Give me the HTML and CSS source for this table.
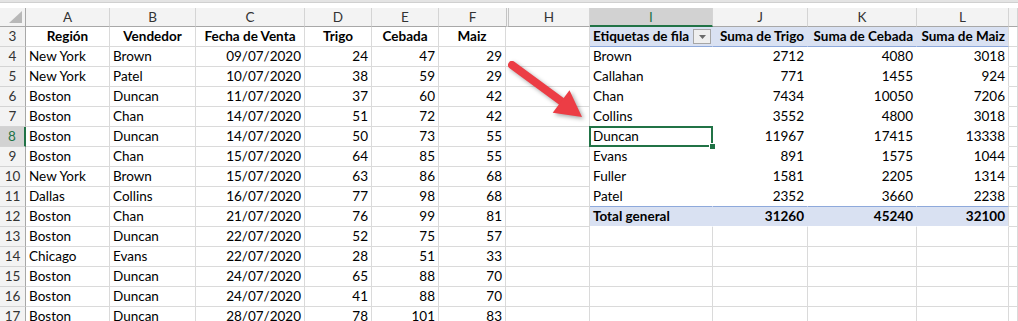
FILE: index.html
```html
<!DOCTYPE html>
<html lang="es">
<head>
<meta charset="utf-8">
<title>Tabla dinámica</title>
<link rel="stylesheet" href="styles.css">
</head>
<body>
<div class="topstrip"><div class="strip"></div></div>
<div class="sheet">
  <div class="grid">
    <!-- column headers -->
    <div class="c corner"><svg width="14" height="13" viewBox="0 0 14 13"><polygon points="13,0 13,12 0,12" fill="#b8b8b8"/></svg></div>
    <div class="c ch">A</div>
    <div class="c ch">B</div>
    <div class="c ch">C</div>
    <div class="c ch">D</div>
    <div class="c ch">E</div>
    <div class="c ch chf">F</div>
    <div class="c ch chh">H</div>
    <div class="c ch sel">I</div>
    <div class="c ch">J</div>
    <div class="c ch">K</div>
    <div class="c ch">L</div>
    <div class="c ch"></div>

    <!-- row 3 -->
    <div class="c rh">3</div>
    <div class="c b ctr">Región</div>
    <div class="c b ctr">Vendedor</div>
    <div class="c b ctr">Fecha de Venta</div>
    <div class="c b ctr">Trigo</div>
    <div class="c b ctr">Cebada</div>
    <div class="c b ctr">Maiz</div>
    <div class="c"></div>
    <div class="c ph pi b lab"><span>Etiquetas de fila</span><span class="dd"><svg width="7" height="4" viewBox="0 0 7 4"><polygon points="0,0 7,0 3.5,4" fill="#6b6b6b"/></svg></span></div>
    <div class="c ph pi b n">Suma de Trigo</div>
    <div class="c ph pi b n">Suma de Cebada</div>
    <div class="c ph pl b n">Suma de Maiz</div>
    <div class="c"></div>

    <!-- row 4 -->
    <div class="c rh">4</div>
    <div class="c">New York</div><div class="c">Brown</div><div class="c n">09/07/2020</div><div class="c n">24</div><div class="c n">47</div><div class="c n">29</div>
    <div class="c"></div>
    <div class="c pv pi">Brown</div><div class="c pv pi n">2712</div><div class="c pv pi n">4080</div><div class="c pv pl n">3018</div>
    <div class="c"></div>

    <!-- row 5 -->
    <div class="c rh">5</div>
    <div class="c">New York</div><div class="c">Patel</div><div class="c n">10/07/2020</div><div class="c n">38</div><div class="c n">59</div><div class="c n">29</div>
    <div class="c"></div>
    <div class="c pv pi">Callahan</div><div class="c pv pi n">771</div><div class="c pv pi n">1455</div><div class="c pv pl n">924</div>
    <div class="c"></div>

    <!-- row 6 -->
    <div class="c rh">6</div>
    <div class="c">Boston</div><div class="c">Duncan</div><div class="c n">11/07/2020</div><div class="c n">37</div><div class="c n">60</div><div class="c n">42</div>
    <div class="c"></div>
    <div class="c pv pi">Chan</div><div class="c pv pi n">7434</div><div class="c pv pi n">10050</div><div class="c pv pl n">7206</div>
    <div class="c"></div>

    <!-- row 7 -->
    <div class="c rh">7</div>
    <div class="c">Boston</div><div class="c">Chan</div><div class="c n">14/07/2020</div><div class="c n">51</div><div class="c n">72</div><div class="c n">42</div>
    <div class="c"></div>
    <div class="c pv pi">Collins</div><div class="c pv pi n">3552</div><div class="c pv pi n">4800</div><div class="c pv pl n">3018</div>
    <div class="c"></div>

    <!-- row 8 -->
    <div class="c rh rsel">8</div>
    <div class="c">Boston</div><div class="c">Duncan</div><div class="c n">14/07/2020</div><div class="c n">50</div><div class="c n">73</div><div class="c n">55</div>
    <div class="c"></div>
    <div class="c pv pi active">Duncan<span class="handle"></span></div><div class="c pv pi n">11967</div><div class="c pv pi n">17415</div><div class="c pv pl n">13338</div>
    <div class="c"></div>

    <!-- row 9 -->
    <div class="c rh">9</div>
    <div class="c">Boston</div><div class="c">Chan</div><div class="c n">15/07/2020</div><div class="c n">64</div><div class="c n">85</div><div class="c n">55</div>
    <div class="c"></div>
    <div class="c pv pi">Evans</div><div class="c pv pi n">891</div><div class="c pv pi n">1575</div><div class="c pv pl n">1044</div>
    <div class="c"></div>

    <!-- row 10 -->
    <div class="c rh">10</div>
    <div class="c">New York</div><div class="c">Brown</div><div class="c n">15/07/2020</div><div class="c n">63</div><div class="c n">86</div><div class="c n">68</div>
    <div class="c"></div>
    <div class="c pv pi">Fuller</div><div class="c pv pi n">1581</div><div class="c pv pi n">2205</div><div class="c pv pl n">1314</div>
    <div class="c"></div>

    <!-- row 11 -->
    <div class="c rh">11</div>
    <div class="c">Dallas</div><div class="c">Collins</div><div class="c n">16/07/2020</div><div class="c n">77</div><div class="c n">98</div><div class="c n">68</div>
    <div class="c"></div>
    <div class="c pv pi pb">Patel</div><div class="c pv pi pb n">2352</div><div class="c pv pi pb n">3660</div><div class="c pv pl pb n">2238</div>
    <div class="c"></div>

    <!-- row 12 -->
    <div class="c rh">12</div>
    <div class="c">Boston</div><div class="c">Chan</div><div class="c n">21/07/2020</div><div class="c n">76</div><div class="c n">99</div><div class="c n">81</div>
    <div class="c"></div>
    <div class="c pt pi b">Total general</div><div class="c pt pi b n">31260</div><div class="c pt pi b n">45240</div><div class="c pt pl b n">32100</div>
    <div class="c"></div>

    <!-- row 13 -->
    <div class="c rh">13</div>
    <div class="c">Boston</div><div class="c">Duncan</div><div class="c n">22/07/2020</div><div class="c n">52</div><div class="c n">75</div><div class="c n">57</div>
    <div class="c"></div><div class="c"></div><div class="c"></div><div class="c"></div><div class="c"></div><div class="c"></div>

    <!-- row 14 -->
    <div class="c rh">14</div>
    <div class="c">Chicago</div><div class="c">Evans</div><div class="c n">22/07/2020</div><div class="c n">28</div><div class="c n">51</div><div class="c n">33</div>
    <div class="c"></div><div class="c"></div><div class="c"></div><div class="c"></div><div class="c"></div><div class="c"></div>

    <!-- row 15 -->
    <div class="c rh">15</div>
    <div class="c">Boston</div><div class="c">Duncan</div><div class="c n">24/07/2020</div><div class="c n">65</div><div class="c n">88</div><div class="c n">70</div>
    <div class="c"></div><div class="c"></div><div class="c"></div><div class="c"></div><div class="c"></div><div class="c"></div>

    <!-- row 16 -->
    <div class="c rh">16</div>
    <div class="c">Boston</div><div class="c">Duncan</div><div class="c n">24/07/2020</div><div class="c n">41</div><div class="c n">88</div><div class="c n">70</div>
    <div class="c"></div><div class="c"></div><div class="c"></div><div class="c"></div><div class="c"></div><div class="c"></div>

    <!-- row 17 -->
    <div class="c rh">17</div>
    <div class="c">Boston</div><div class="c">Duncan</div><div class="c n">28/07/2020</div><div class="c n">78</div><div class="c n">101</div><div class="c n">83</div>
    <div class="c"></div><div class="c"></div><div class="c"></div><div class="c"></div><div class="c"></div><div class="c"></div>
  </div>

  <svg class="arrow" width="100" height="80" viewBox="0 0 100 80">
    <line x1="12" y1="10" x2="63" y2="47.5" stroke="#ec3d45" stroke-width="8" stroke-linecap="round"/>
    <polygon points="82,62 52.7,57.8 69.5,35.2" fill="#ec3d45"/>
  </svg>
</div>
</body>
</html>
```

FILE: styles.css
```css
html, body {
  margin: 0;
  padding: 0;
  background: #ffffff;
}

body {
  width: 1018px;
  height: 321px;
  overflow: hidden;
  font-family: Lato, "Liberation Sans", sans-serif;
  font-size: 13.5px;
  color: #000;
}

.topstrip {
  height: 8px;
  background: #ffffff;
}

.strip {
  height: 2px;
  background: #e4e4e4;
  border-bottom: 1px solid #d0d0d0;
}

.sheet {
  position: relative;
}

.grid {
  display: grid;
  grid-template-columns: 26px 84px 86px 109px 67px 67px 67px 84px 123px 95px 109px 92px 1fr;
  grid-template-rows: 19px repeat(15, 20px);
}

.c {
  box-sizing: border-box;
  border-right: 1px solid #dadada;
  border-bottom: 1px solid #dadada;
  padding: 0 3px;
  line-height: 19px;
  white-space: nowrap;
  overflow: hidden;
  background: #ffffff;
}

.n { text-align: right; }
.ctr { text-align: center; }
.b { font-weight: 700; }

.corner {
  background: #f3f3f3;
  border-right: 1px solid #a8a8a8;
  border-bottom: 1px solid #a8a8a8;
  display: flex;
  align-items: flex-end;
  justify-content: flex-end;
  padding: 0 2px 2px 0;
}

.corner svg { display: block; }

.ch {
  background: #f3f3f3;
  text-align: center;
  color: #333;
  border-right: 1px solid #d4d4d4;
  border-bottom: 1px solid #a8a8a8;
  line-height: 18px;
}

.chf { border-right: none; }
.chh { border-left: 3px double #c4c4c4; }

.ch.sel {
  background: #d2d2d2;
  color: #217346;
  border-bottom: 2px solid #217346;
}

.rh {
  background: #f3f3f3;
  text-align: center;
  color: #333;
  padding: 0;
  border-right: 1px solid #a8a8a8;
  border-bottom: 1px solid #d4d4d4;
}

.rh.rsel {
  background: #d2d2d2;
  color: #217346;
  border-right: 2px solid #217346;
}

/* pivot table */
.pv { border-bottom-color: #ffffff; }
.pi { border-right-color: transparent; }
.pl { border-right-color: #dadada; }

.ph {
  background: #d9e1f2;
  border-bottom: 1px solid #8ea9db;
}

.ph.pi { border-right-color: #d9e1f2; }

.pv.pb { border-bottom: 1px solid #8ea9db; }

.pt {
  background: #d9e1f2;
  border-bottom-color: #ffffff;
}

.pt.pi { border-right-color: #d9e1f2; }

.lab {
  display: flex;
  justify-content: space-between;
  align-items: center;
  padding-right: 1px;
}

.dd {
  box-sizing: border-box;
  width: 18px;
  height: 15px;
  border: 1px solid #a6a6a6;
  background: #efefef;
  display: flex;
  align-items: center;
  justify-content: center;
}

.dd svg { display: block; }

.active {
  position: relative;
  overflow: visible;
  z-index: 2;
}

.active::before {
  content: "";
  position: absolute;
  left: -1px;
  top: -1px;
  right: -1px;
  bottom: -1px;
  border: 2px solid #217346;
  pointer-events: none;
}

.handle {
  position: absolute;
  right: -4px;
  bottom: -4px;
  width: 5px;
  height: 5px;
  background: #217346;
  border: 1px solid #ffffff;
}

.arrow {
  position: absolute;
  left: 500px;
  top: 47px;
  filter: drop-shadow(2px 2px 2px rgba(0, 0, 0, 0.35));
  z-index: 3;
}
```
